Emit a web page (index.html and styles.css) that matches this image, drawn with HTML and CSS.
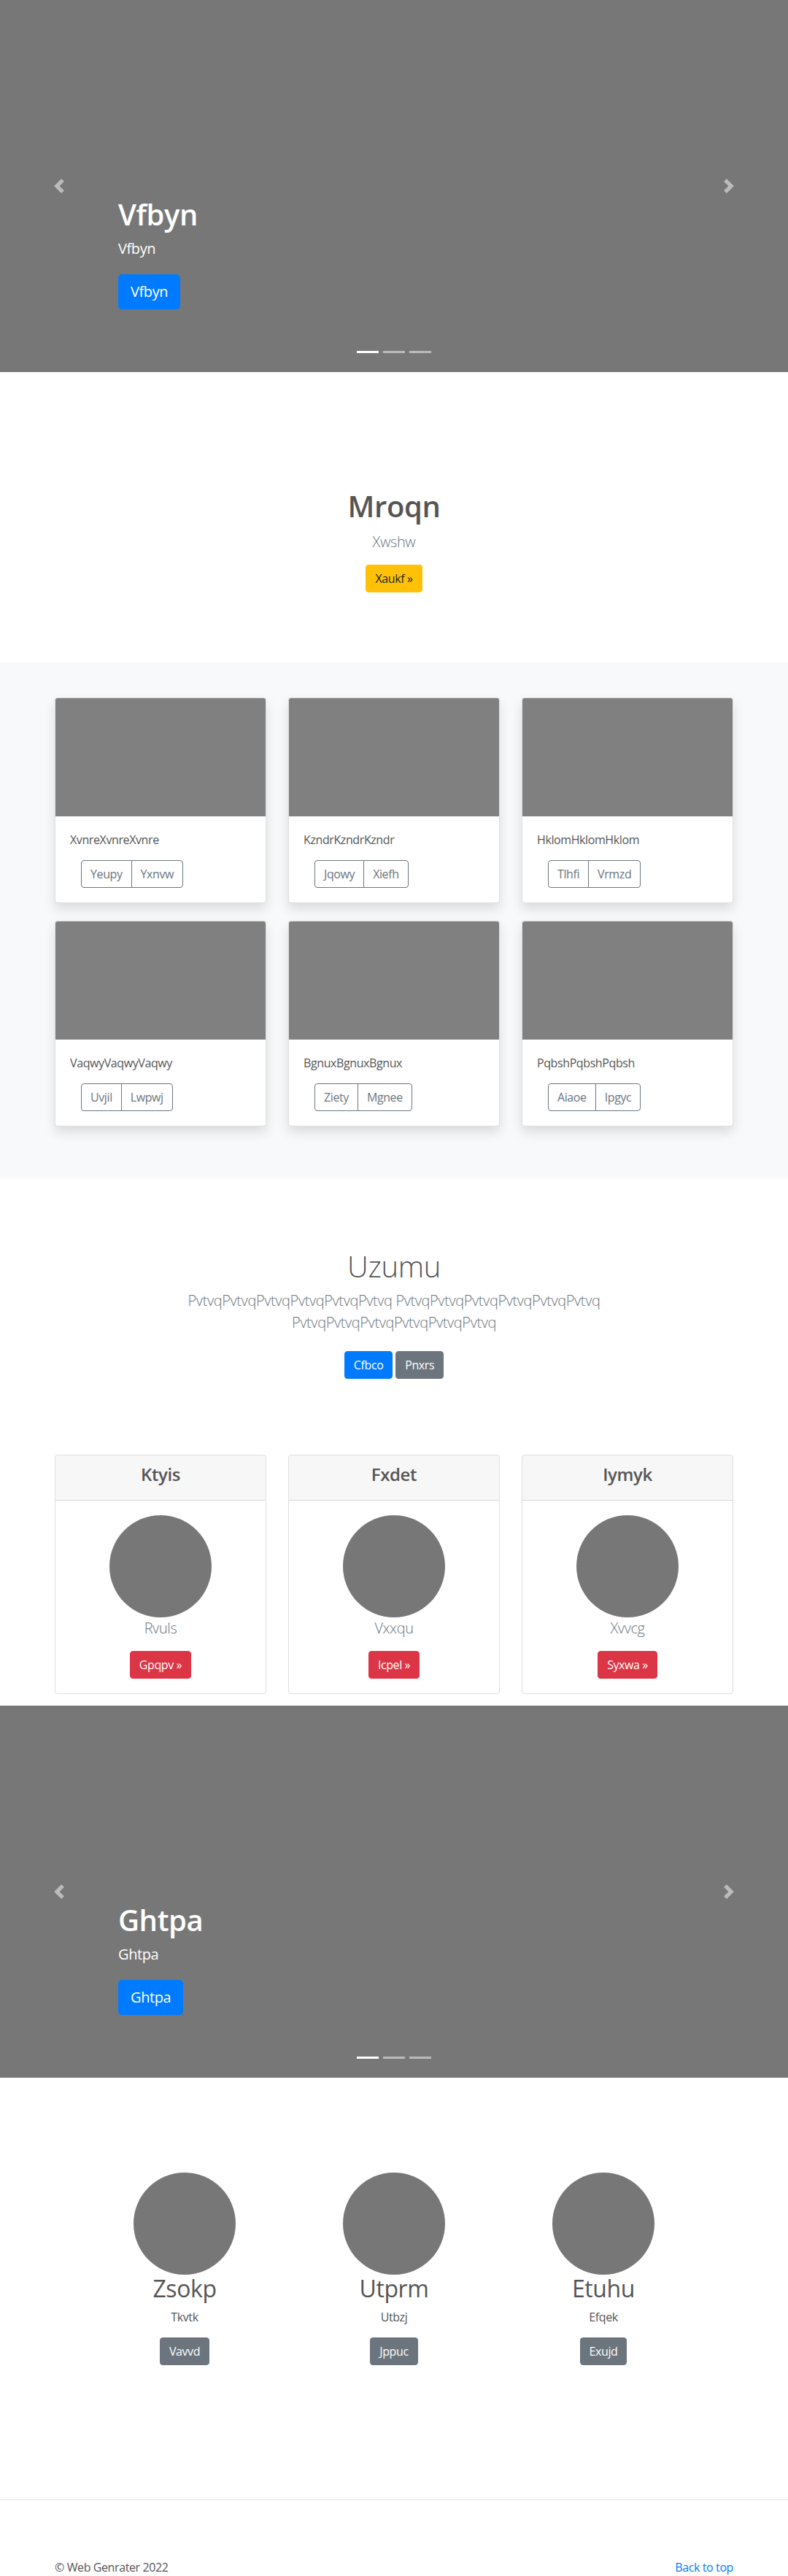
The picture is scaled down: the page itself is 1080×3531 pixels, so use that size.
FILE: index.html
```html
<!DOCTYPE html>
<html lang="en">
<head>
<meta charset="utf-8">
<title>Web Genrater</title>
<link rel="stylesheet" href="styles.css">
</head>
<body>

<div class="carousel">
  <div class="carousel-slide">
    <h1 class="caption-title">Vfbyn</h1>
    <p class="caption-lead">Vfbyn</p>
    <a class="btn btn-lg btn-primary" href="#">Vfbyn</a>
  </div>
  <ol class="indicators"><li class="active"></li><li></li><li></li></ol>
  <a class="control control-prev" href="#"><svg width="20" height="20" viewBox="0 0 8 8" fill="#fff"><path d="M5.25 0l-4 4 4 4 1.5-1.5L4.25 4l2.5-2.5L5.25 0z"/></svg></a>
  <a class="control control-next" href="#"><svg width="20" height="20" viewBox="0 0 8 8" fill="#fff"><path d="M2.75 0l-1.5 1.5L3.75 4l-2.5 2.5L2.75 8l4-4-4-4z"/></svg></a>
</div>

<section class="intro">
  <h1 class="intro-title">Mroqn</h1>
  <p class="lead muted intro-lead">Xwshw</p>
  <a class="btn btn-warning" href="#">Xaukf &raquo;</a>
</section>

<section class="album">
  <div class="container album-grid">
    <div class="card">
      <div class="card-img"></div>
      <div class="card-body">
        <p class="card-text">XvnreXvnreXvnre</p>
        <div class="btn-group"><a class="btn btn-outline" href="#">Yeupy</a><a class="btn btn-outline" href="#">Yxnvw</a></div>
      </div>
    </div>
    <div class="card">
      <div class="card-img"></div>
      <div class="card-body">
        <p class="card-text">KzndrKzndrKzndr</p>
        <div class="btn-group"><a class="btn btn-outline" href="#">Jqowy</a><a class="btn btn-outline" href="#">Xiefh</a></div>
      </div>
    </div>
    <div class="card">
      <div class="card-img"></div>
      <div class="card-body">
        <p class="card-text">HklomHklomHklom</p>
        <div class="btn-group"><a class="btn btn-outline" href="#">Tlhfi</a><a class="btn btn-outline" href="#">Vrmzd</a></div>
      </div>
    </div>
    <div class="card">
      <div class="card-img"></div>
      <div class="card-body">
        <p class="card-text">VaqwyVaqwyVaqwy</p>
        <div class="btn-group"><a class="btn btn-outline" href="#">Uvjil</a><a class="btn btn-outline" href="#">Lwpwj</a></div>
      </div>
    </div>
    <div class="card">
      <div class="card-img"></div>
      <div class="card-body">
        <p class="card-text">BgnuxBgnuxBgnux</p>
        <div class="btn-group"><a class="btn btn-outline" href="#">Ziety</a><a class="btn btn-outline" href="#">Mgnee</a></div>
      </div>
    </div>
    <div class="card">
      <div class="card-img"></div>
      <div class="card-body">
        <p class="card-text">PqbshPqbshPqbsh</p>
        <div class="btn-group"><a class="btn btn-outline" href="#">Aiaoe</a><a class="btn btn-outline" href="#">Ipgyc</a></div>
      </div>
    </div>
  </div>
</section>

<section class="jumbo">
  <h1 class="jumbo-title">Uzumu</h1>
  <p class="lead muted jumbo-lead">PvtvqPvtvqPvtvqPvtvqPvtvqPvtvq PvtvqPvtvqPvtvqPvtvqPvtvqPvtvq PvtvqPvtvqPvtvqPvtvqPvtvqPvtvq</p>
  <p class="jumbo-actions"><a class="btn btn-primary" href="#">Cfbco</a> <a class="btn btn-secondary" href="#">Pnxrs</a></p>
</section>

<section class="container pricing-grid">
  <div class="pcard">
    <div class="pcard-header"><h4 class="pcard-title">Ktyis</h4></div>
    <div class="pcard-body">
      <div class="circle"></div>
      <p class="lead muted">Rvuls</p>
      <a class="btn btn-danger" href="#">Gpqpv &raquo;</a>
    </div>
  </div>
  <div class="pcard">
    <div class="pcard-header"><h4 class="pcard-title">Fxdet</h4></div>
    <div class="pcard-body">
      <div class="circle"></div>
      <p class="lead muted">Vxxqu</p>
      <a class="btn btn-danger" href="#">Icpel &raquo;</a>
    </div>
  </div>
  <div class="pcard">
    <div class="pcard-header"><h4 class="pcard-title">Iymyk</h4></div>
    <div class="pcard-body">
      <div class="circle"></div>
      <p class="lead muted">Xvvcg</p>
      <a class="btn btn-danger" href="#">Syxwa &raquo;</a>
    </div>
  </div>
</section>

<div class="carousel">
  <div class="carousel-slide">
    <h1 class="caption-title">Ghtpa</h1>
    <p class="caption-lead">Ghtpa</p>
    <a class="btn btn-lg btn-primary" href="#">Ghtpa</a>
  </div>
  <ol class="indicators"><li class="active"></li><li></li><li></li></ol>
  <a class="control control-prev" href="#"><svg width="20" height="20" viewBox="0 0 8 8" fill="#fff"><path d="M5.25 0l-4 4 4 4 1.5-1.5L4.25 4l2.5-2.5L5.25 0z"/></svg></a>
  <a class="control control-next" href="#"><svg width="20" height="20" viewBox="0 0 8 8" fill="#fff"><path d="M2.75 0l-1.5 1.5L3.75 4l-2.5 2.5L2.75 8l4-4-4-4z"/></svg></a>
</div>

<section class="team">
  <div class="team-col">
    <div class="circle"></div>
    <h2 class="team-name">Zsokp</h2>
    <p class="team-text">Tkvtk</p>
    <a class="btn btn-secondary" href="#">Vavvd</a>
  </div>
  <div class="team-col">
    <div class="circle"></div>
    <h2 class="team-name">Utprm</h2>
    <p class="team-text">Utbzj</p>
    <a class="btn btn-secondary" href="#">Jppuc</a>
  </div>
  <div class="team-col">
    <div class="circle"></div>
    <h2 class="team-name">Etuhu</h2>
    <p class="team-text">Efqek</p>
    <a class="btn btn-secondary" href="#">Exujd</a>
  </div>
</section>

<hr class="divider">

<footer class="container footer">
  <p>&copy; Web Genrater 2022</p>
  <p><a class="top-link" href="#">Back to top</a></p>
</footer>

</body>
</html>
```

FILE: styles.css
```css
* { box-sizing: border-box; }

body {
  margin: 0;
  font-family: "Open Sans", "Noto Sans", sans-serif;
  font-size: 16px;
  line-height: 1.5;
  letter-spacing: -0.025em;
  color: #555;
  background: #fff;
}

h1, h2, h4, p { margin: 0; }

.container {
  width: 960px;
  margin: 0 auto;
  padding: 0 15px;
}

/* Buttons */
.btn {
  display: inline-block;
  font-size: 16px;
  line-height: 24px;
  padding: 6px 12px;
  border: 1px solid transparent;
  border-radius: 4px;
  text-decoration: none;
  text-align: center;
  font-weight: 400;
  vertical-align: middle;
}
.btn-lg { font-size: 20px; line-height: 30px; padding: 8px 16px; border-radius: 4.8px; }
.btn-primary { background: #007bff; border-color: #007bff; color: #fff; }
.btn-secondary { background: #6c757d; border-color: #6c757d; color: #fff; }
.btn-warning { background: #ffc107; border-color: #ffc107; color: #212529; }
.btn-danger { background: #dc3545; border-color: #dc3545; color: #fff; }
.btn-outline { background: transparent; border-color: #6c757d; color: #6c757d; }

.lead { font-size: 20px; line-height: 30px; font-weight: 300; }
.muted { color: #6c757d; }

/* Carousel */
.carousel {
  position: relative;
  height: 510px;
  background: #777;
  overflow: hidden;
}
.carousel-slide {
  height: 100%;
  display: flex;
  flex-direction: column;
  justify-content: flex-end;
  align-items: flex-start;
  padding: 0 15% 86px;
  color: #fff;
}
.caption-title { font-size: 40px; line-height: 48px; font-weight: 600; margin-bottom: 8px; }
.caption-lead { font-size: 20px; line-height: 30px; margin-bottom: 20px; }

.indicators {
  position: absolute;
  left: 0;
  right: 0;
  bottom: 26px;
  margin: 0;
  padding: 0;
  list-style: none;
  display: flex;
  justify-content: center;
  gap: 6px;
}
.indicators li { width: 30px; height: 3px; background: #fff; opacity: .5; }
.indicators li.active { opacity: 1; }

.control {
  position: absolute;
  top: 0;
  bottom: 0;
  width: 15%;
  display: flex;
  align-items: center;
  justify-content: center;
  opacity: .5;
}
.control-prev { left: 0; }
.control-next { right: 0; }

/* Intro */
.intro { text-align: center; padding: 160px 0 96px; }
.intro-title { font-size: 40px; line-height: 48px; font-weight: 600; margin-bottom: 10px; }
.intro-lead { margin-bottom: 16px; }

/* Album */
.album { background: #f8f9fa; padding: 48px 0; }
.album-grid {
  display: grid;
  grid-template-columns: repeat(3, 1fr);
  column-gap: 30px;
  row-gap: 24px;
  padding-bottom: 24px;
}
.card {
  background: #fff;
  border: 1px solid rgba(0,0,0,.125);
  border-radius: 4px;
  overflow: hidden;
  box-shadow: 0 8px 16px rgba(0,0,0,.12);
}
.card-img { height: 162px; background: #808080; }
.card-body { padding: 20px; }
.card-text { margin-bottom: 16px; }
.btn-group { display: inline-flex; margin-left: 15px; }
.btn-group .btn + .btn { margin-left: -1px; border-top-left-radius: 0; border-bottom-left-radius: 0; }
.btn-group .btn:first-child { border-top-right-radius: 0; border-bottom-right-radius: 0; }

/* Jumbotron */
.jumbo { text-align: center; padding: 96px 0; }
.jumbo-title { font-size: 40px; line-height: 48px; font-weight: 300; margin-bottom: 8px; }
.jumbo-lead { max-width: 700px; margin: 0 auto 16px; }
.jumbo-actions .btn { margin: 8px 0; }

/* Pricing */
.pricing-grid {
  display: grid;
  grid-template-columns: repeat(3, 1fr);
  column-gap: 30px;
  padding-bottom: 16px;
}
.pcard {
  border: 1px solid rgba(0,0,0,.125);
  border-radius: 4px;
  text-align: center;
  overflow: hidden;
}
.pcard-header {
  background: rgba(0,0,0,.03);
  border-bottom: 1px solid rgba(0,0,0,.125);
  padding: 12px 20px;
}
.pcard-title { font-size: 24px; line-height: 28.8px; font-weight: 600; margin-bottom: 8px; }
.pcard-body { padding: 20px; }
.pcard-body .lead { margin-bottom: 16px; }

.circle {
  width: 140px;
  height: 140px;
  border-radius: 50%;
  background: #777;
  margin: 0 auto;
}

/* Team */
.team {
  display: grid;
  grid-template-columns: repeat(3, 287px);
  justify-content: center;
  text-align: center;
  padding: 130px 0 104px;
}
.team-name { font-size: 32px; line-height: 38.4px; font-weight: 400; margin-bottom: 8px; }
.team-text { margin-bottom: 16px; }

.divider {
  margin: 80px 0 0;
  border: 0;
  border-top: 1px solid rgba(0,0,0,.1);
}

.footer {
  display: flex;
  justify-content: space-between;
  padding-top: 80px;
}
.top-link { color: #007bff; text-decoration: none; }
```
